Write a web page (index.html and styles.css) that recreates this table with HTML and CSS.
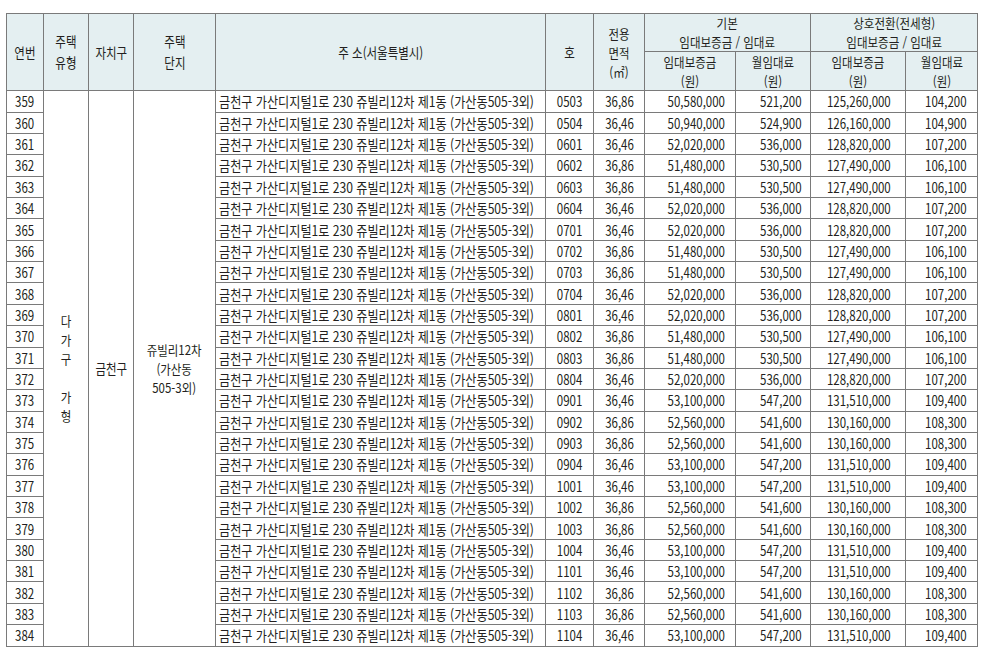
FILE: index.html
```html
<!DOCTYPE html>
<html lang="ko">
<head>
<meta charset="utf-8">
<title>임대주택 목록</title>
<link rel="stylesheet" href="styles.css">
</head>
<body>
<table class="grid">
  <colgroup>
    <col class="c-no"><col class="c-type"><col class="c-gu"><col class="c-danji"><col class="c-addr"><col class="c-ho"><col class="c-area"><col class="c-dep"><col class="c-rent"><col class="c-dep2"><col class="c-rent2">
  </colgroup>
  <thead>
    <tr class="h1">
      <th rowspan="2"><span class="t">연번</span></th>
      <th rowspan="2" class="tall"><span class="t">주택<br>유형</span></th>
      <th rowspan="2"><span class="t">자치구</span></th>
      <th rowspan="2" class="tall"><span class="t">주택<br>단지</span></th>
      <th rowspan="2"><span class="t">주 소(서울특별시)</span></th>
      <th rowspan="2"><span class="t">호</span></th>
      <th rowspan="2" class="area sm"><span class="t">전용<br>면적<br>(㎡)</span></th>
      <th colspan="2" class="grp sm"><span class="t">기본<br>임대보증금 / 임대료</span></th>
      <th colspan="2" class="grp sm"><span class="t">상호전환(전세형)<br>임대보증금 / 임대료</span></th>
    </tr>
    <tr class="h2">
      <th class="sm"><span class="t">임대보증금<br>(원)</span></th>
      <th class="sm"><span class="t">월임대료<br>(원)</span></th>
      <th class="sm"><span class="t">임대보증금<br>(원)</span></th>
      <th class="sm"><span class="t">월임대료<br>(원)</span></th>
    </tr>
  </thead>
  <tbody>
    <tr><td><span class="t">359</span></td><td rowspan="26" class="vert sm"><span class="t">다<br>가<br>구<br><br>가<br>형</span></td><td rowspan="26"><span class="t">금천구</span></td><td rowspan="26" class="danji sm"><span class="t">쥬빌리12차<br>(가산동<br>505-3외)</span></td><td class="l"><span class="t">금천구 가산디지털1로 230 쥬빌리12차 제1동 (가산동505-3외)</span></td><td><span class="t">0503</span></td><td><span class="t">36,86</span></td><td class="r r1"><span class="t">50,580,000</span></td><td class="r r2"><span class="t">521,200</span></td><td class="r r3"><span class="t">125,260,000</span></td><td class="r r4"><span class="t">104,200</span></td></tr>
    <tr><td><span class="t">360</span></td><td class="l"><span class="t">금천구 가산디지털1로 230 쥬빌리12차 제1동 (가산동505-3외)</span></td><td><span class="t">0504</span></td><td><span class="t">36,46</span></td><td class="r r1"><span class="t">50,940,000</span></td><td class="r r2"><span class="t">524,900</span></td><td class="r r3"><span class="t">126,160,000</span></td><td class="r r4"><span class="t">104,900</span></td></tr>
    <tr><td><span class="t">361</span></td><td class="l"><span class="t">금천구 가산디지털1로 230 쥬빌리12차 제1동 (가산동505-3외)</span></td><td><span class="t">0601</span></td><td><span class="t">36,46</span></td><td class="r r1"><span class="t">52,020,000</span></td><td class="r r2"><span class="t">536,000</span></td><td class="r r3"><span class="t">128,820,000</span></td><td class="r r4"><span class="t">107,200</span></td></tr>
    <tr><td><span class="t">362</span></td><td class="l"><span class="t">금천구 가산디지털1로 230 쥬빌리12차 제1동 (가산동505-3외)</span></td><td><span class="t">0602</span></td><td><span class="t">36,86</span></td><td class="r r1"><span class="t">51,480,000</span></td><td class="r r2"><span class="t">530,500</span></td><td class="r r3"><span class="t">127,490,000</span></td><td class="r r4"><span class="t">106,100</span></td></tr>
    <tr><td><span class="t">363</span></td><td class="l"><span class="t">금천구 가산디지털1로 230 쥬빌리12차 제1동 (가산동505-3외)</span></td><td><span class="t">0603</span></td><td><span class="t">36,86</span></td><td class="r r1"><span class="t">51,480,000</span></td><td class="r r2"><span class="t">530,500</span></td><td class="r r3"><span class="t">127,490,000</span></td><td class="r r4"><span class="t">106,100</span></td></tr>
    <tr><td><span class="t">364</span></td><td class="l"><span class="t">금천구 가산디지털1로 230 쥬빌리12차 제1동 (가산동505-3외)</span></td><td><span class="t">0604</span></td><td><span class="t">36,46</span></td><td class="r r1"><span class="t">52,020,000</span></td><td class="r r2"><span class="t">536,000</span></td><td class="r r3"><span class="t">128,820,000</span></td><td class="r r4"><span class="t">107,200</span></td></tr>
    <tr><td><span class="t">365</span></td><td class="l"><span class="t">금천구 가산디지털1로 230 쥬빌리12차 제1동 (가산동505-3외)</span></td><td><span class="t">0701</span></td><td><span class="t">36,46</span></td><td class="r r1"><span class="t">52,020,000</span></td><td class="r r2"><span class="t">536,000</span></td><td class="r r3"><span class="t">128,820,000</span></td><td class="r r4"><span class="t">107,200</span></td></tr>
    <tr><td><span class="t">366</span></td><td class="l"><span class="t">금천구 가산디지털1로 230 쥬빌리12차 제1동 (가산동505-3외)</span></td><td><span class="t">0702</span></td><td><span class="t">36,86</span></td><td class="r r1"><span class="t">51,480,000</span></td><td class="r r2"><span class="t">530,500</span></td><td class="r r3"><span class="t">127,490,000</span></td><td class="r r4"><span class="t">106,100</span></td></tr>
    <tr><td><span class="t">367</span></td><td class="l"><span class="t">금천구 가산디지털1로 230 쥬빌리12차 제1동 (가산동505-3외)</span></td><td><span class="t">0703</span></td><td><span class="t">36,86</span></td><td class="r r1"><span class="t">51,480,000</span></td><td class="r r2"><span class="t">530,500</span></td><td class="r r3"><span class="t">127,490,000</span></td><td class="r r4"><span class="t">106,100</span></td></tr>
    <tr><td><span class="t">368</span></td><td class="l"><span class="t">금천구 가산디지털1로 230 쥬빌리12차 제1동 (가산동505-3외)</span></td><td><span class="t">0704</span></td><td><span class="t">36,46</span></td><td class="r r1"><span class="t">52,020,000</span></td><td class="r r2"><span class="t">536,000</span></td><td class="r r3"><span class="t">128,820,000</span></td><td class="r r4"><span class="t">107,200</span></td></tr>
    <tr><td><span class="t">369</span></td><td class="l"><span class="t">금천구 가산디지털1로 230 쥬빌리12차 제1동 (가산동505-3외)</span></td><td><span class="t">0801</span></td><td><span class="t">36,46</span></td><td class="r r1"><span class="t">52,020,000</span></td><td class="r r2"><span class="t">536,000</span></td><td class="r r3"><span class="t">128,820,000</span></td><td class="r r4"><span class="t">107,200</span></td></tr>
    <tr><td><span class="t">370</span></td><td class="l"><span class="t">금천구 가산디지털1로 230 쥬빌리12차 제1동 (가산동505-3외)</span></td><td><span class="t">0802</span></td><td><span class="t">36,86</span></td><td class="r r1"><span class="t">51,480,000</span></td><td class="r r2"><span class="t">530,500</span></td><td class="r r3"><span class="t">127,490,000</span></td><td class="r r4"><span class="t">106,100</span></td></tr>
    <tr><td><span class="t">371</span></td><td class="l"><span class="t">금천구 가산디지털1로 230 쥬빌리12차 제1동 (가산동505-3외)</span></td><td><span class="t">0803</span></td><td><span class="t">36,86</span></td><td class="r r1"><span class="t">51,480,000</span></td><td class="r r2"><span class="t">530,500</span></td><td class="r r3"><span class="t">127,490,000</span></td><td class="r r4"><span class="t">106,100</span></td></tr>
    <tr><td><span class="t">372</span></td><td class="l"><span class="t">금천구 가산디지털1로 230 쥬빌리12차 제1동 (가산동505-3외)</span></td><td><span class="t">0804</span></td><td><span class="t">36,46</span></td><td class="r r1"><span class="t">52,020,000</span></td><td class="r r2"><span class="t">536,000</span></td><td class="r r3"><span class="t">128,820,000</span></td><td class="r r4"><span class="t">107,200</span></td></tr>
    <tr><td><span class="t">373</span></td><td class="l"><span class="t">금천구 가산디지털1로 230 쥬빌리12차 제1동 (가산동505-3외)</span></td><td><span class="t">0901</span></td><td><span class="t">36,46</span></td><td class="r r1"><span class="t">53,100,000</span></td><td class="r r2"><span class="t">547,200</span></td><td class="r r3"><span class="t">131,510,000</span></td><td class="r r4"><span class="t">109,400</span></td></tr>
    <tr><td><span class="t">374</span></td><td class="l"><span class="t">금천구 가산디지털1로 230 쥬빌리12차 제1동 (가산동505-3외)</span></td><td><span class="t">0902</span></td><td><span class="t">36,86</span></td><td class="r r1"><span class="t">52,560,000</span></td><td class="r r2"><span class="t">541,600</span></td><td class="r r3"><span class="t">130,160,000</span></td><td class="r r4"><span class="t">108,300</span></td></tr>
    <tr><td><span class="t">375</span></td><td class="l"><span class="t">금천구 가산디지털1로 230 쥬빌리12차 제1동 (가산동505-3외)</span></td><td><span class="t">0903</span></td><td><span class="t">36,86</span></td><td class="r r1"><span class="t">52,560,000</span></td><td class="r r2"><span class="t">541,600</span></td><td class="r r3"><span class="t">130,160,000</span></td><td class="r r4"><span class="t">108,300</span></td></tr>
    <tr><td><span class="t">376</span></td><td class="l"><span class="t">금천구 가산디지털1로 230 쥬빌리12차 제1동 (가산동505-3외)</span></td><td><span class="t">0904</span></td><td><span class="t">36,46</span></td><td class="r r1"><span class="t">53,100,000</span></td><td class="r r2"><span class="t">547,200</span></td><td class="r r3"><span class="t">131,510,000</span></td><td class="r r4"><span class="t">109,400</span></td></tr>
    <tr><td><span class="t">377</span></td><td class="l"><span class="t">금천구 가산디지털1로 230 쥬빌리12차 제1동 (가산동505-3외)</span></td><td><span class="t">1001</span></td><td><span class="t">36,46</span></td><td class="r r1"><span class="t">53,100,000</span></td><td class="r r2"><span class="t">547,200</span></td><td class="r r3"><span class="t">131,510,000</span></td><td class="r r4"><span class="t">109,400</span></td></tr>
    <tr><td><span class="t">378</span></td><td class="l"><span class="t">금천구 가산디지털1로 230 쥬빌리12차 제1동 (가산동505-3외)</span></td><td><span class="t">1002</span></td><td><span class="t">36,86</span></td><td class="r r1"><span class="t">52,560,000</span></td><td class="r r2"><span class="t">541,600</span></td><td class="r r3"><span class="t">130,160,000</span></td><td class="r r4"><span class="t">108,300</span></td></tr>
    <tr><td><span class="t">379</span></td><td class="l"><span class="t">금천구 가산디지털1로 230 쥬빌리12차 제1동 (가산동505-3외)</span></td><td><span class="t">1003</span></td><td><span class="t">36,86</span></td><td class="r r1"><span class="t">52,560,000</span></td><td class="r r2"><span class="t">541,600</span></td><td class="r r3"><span class="t">130,160,000</span></td><td class="r r4"><span class="t">108,300</span></td></tr>
    <tr><td><span class="t">380</span></td><td class="l"><span class="t">금천구 가산디지털1로 230 쥬빌리12차 제1동 (가산동505-3외)</span></td><td><span class="t">1004</span></td><td><span class="t">36,46</span></td><td class="r r1"><span class="t">53,100,000</span></td><td class="r r2"><span class="t">547,200</span></td><td class="r r3"><span class="t">131,510,000</span></td><td class="r r4"><span class="t">109,400</span></td></tr>
    <tr><td><span class="t">381</span></td><td class="l"><span class="t">금천구 가산디지털1로 230 쥬빌리12차 제1동 (가산동505-3외)</span></td><td><span class="t">1101</span></td><td><span class="t">36,46</span></td><td class="r r1"><span class="t">53,100,000</span></td><td class="r r2"><span class="t">547,200</span></td><td class="r r3"><span class="t">131,510,000</span></td><td class="r r4"><span class="t">109,400</span></td></tr>
    <tr><td><span class="t">382</span></td><td class="l"><span class="t">금천구 가산디지털1로 230 쥬빌리12차 제1동 (가산동505-3외)</span></td><td><span class="t">1102</span></td><td><span class="t">36,86</span></td><td class="r r1"><span class="t">52,560,000</span></td><td class="r r2"><span class="t">541,600</span></td><td class="r r3"><span class="t">130,160,000</span></td><td class="r r4"><span class="t">108,300</span></td></tr>
    <tr><td><span class="t">383</span></td><td class="l"><span class="t">금천구 가산디지털1로 230 쥬빌리12차 제1동 (가산동505-3외)</span></td><td><span class="t">1103</span></td><td><span class="t">36,86</span></td><td class="r r1"><span class="t">52,560,000</span></td><td class="r r2"><span class="t">541,600</span></td><td class="r r3"><span class="t">130,160,000</span></td><td class="r r4"><span class="t">108,300</span></td></tr>
    <tr><td><span class="t">384</span></td><td class="l"><span class="t">금천구 가산디지털1로 230 쥬빌리12차 제1동 (가산동505-3외)</span></td><td><span class="t">1104</span></td><td><span class="t">36,46</span></td><td class="r r1"><span class="t">53,100,000</span></td><td class="r r2"><span class="t">547,200</span></td><td class="r r3"><span class="t">131,510,000</span></td><td class="r r4"><span class="t">109,400</span></td></tr>
  </tbody>
</table>
</body>
</html>
```

FILE: styles.css
```css
html, body {
  margin: 0;
  background: #ffffff;
}

body {
  padding: 13px 0 0 6px;
  font-family: "Noto Sans CJK KR", "Noto Sans", sans-serif;
  font-size: 14px;
  color: #231f20;
}

.grid {
  border-collapse: collapse;
  table-layout: fixed;
  width: 971px;
}

.c-no { width: 37px; }
.c-type { width: 45px; }
.c-gu { width: 45px; }
.c-danji { width: 82px; }
.c-addr { width: 330px; }
.c-ho { width: 48px; }
.c-area { width: 51px; }
.c-dep { width: 91px; }
.c-rent { width: 75px; }
.c-dep2 { width: 95px; }
.c-rent2 { width: 72px; }

.grid th,
.grid td {
  border: 1px solid #7a7a7a;
  padding: 0;
  text-align: center;
  vertical-align: middle;
  white-space: nowrap;
  overflow: visible;
  font-weight: normal;
}

.grid th {
  background: #e4eff1;
  line-height: 21px;
}

.h1 { height: 37px; }
.h2 { height: 38px; }

.grid tbody tr {
  height: 21.36px;
}

.grid td {
  line-height: 20px;
}

.t {
  display: inline-block;
  transform: scaleX(0.82);
  transform-origin: center;
}

/* multi-line cells set a little smaller so lines can sit close together */
.grid .sm {
  font-size: 13px;
  line-height: 19px;
}
.sm .t { transform: scaleX(0.88); }

.grid th.grp {
  font-size: 12.8px;
  line-height: 18.6px;
}
.grp .t { transform: scaleX(0.9); }

.grid td.l {
  text-align: left;
  padding-left: 3px;
}
.l .t {
  transform: scaleX(0.865);
  transform-origin: left center;
}

.grid td.r { text-align: right; }
.r .t { transform-origin: right center; }
.grid td.r1 { padding-right: 10px; }
.grid td.r2 { padding-right: 8px; }
.grid td.r3 { padding-right: 14px; }
.grid td.r4 { padding-right: 11px; }
```
